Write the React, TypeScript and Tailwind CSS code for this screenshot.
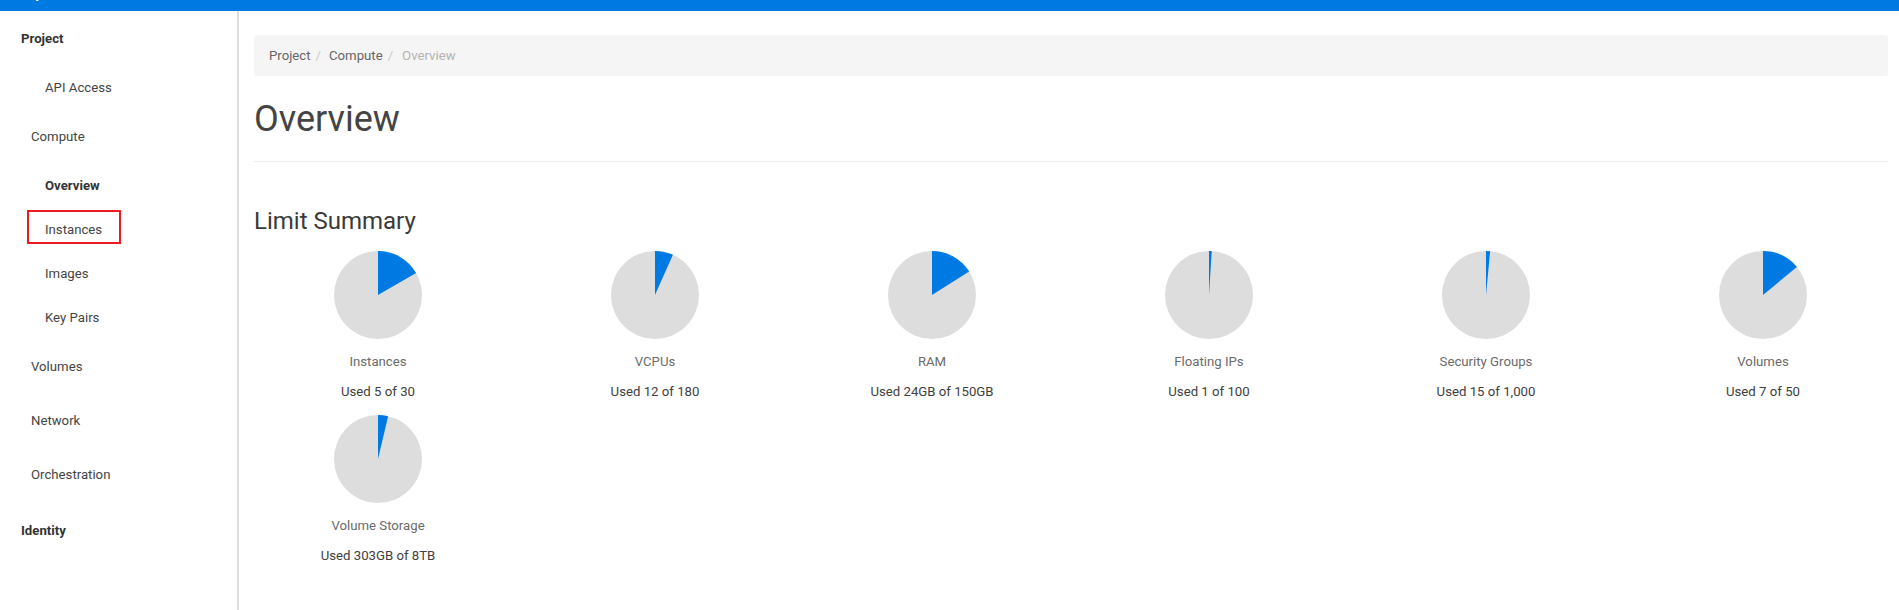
const navFont = { fontFamily: "Roboto, sans-serif" };

type Stat = { label: string; used: string; pct: number };

const stats: Stat[] = [
  { label: "Instances", used: "Used 5 of 30", pct: 5 / 30 },
  { label: "VCPUs", used: "Used 12 of 180", pct: 12 / 180 },
  { label: "RAM", used: "Used 24GB of 150GB", pct: 24 / 150 },
  { label: "Floating IPs", used: "Used 1 of 100", pct: 1 / 100 },
  { label: "Security Groups", used: "Used 15 of 1,000", pct: 15 / 1000 },
  { label: "Volumes", used: "Used 7 of 50", pct: 7 / 50 },
  { label: "Volume Storage", used: "Used 303GB of 8TB", pct: 303 / 8192 },
];

function Pie({ pct }: { pct: number }) {
  const a = pct * 2 * Math.PI;
  const x = 44 + 44 * Math.sin(a);
  const y = 44 - 44 * Math.cos(a);
  return (
    <svg width="88" height="88" viewBox="0 0 88 88" className="block">
      <circle cx="44" cy="44" r="44" fill="#dddddd" />
      <path d={`M44 44 L44 0 A44 44 0 0 1 ${x} ${y} Z`} fill="#007ae3" />
    </svg>
  );
}

function StatCell({ stat }: { stat: Stat }) {
  return (
    <div className="flex flex-col items-center h-[164px]">
      <Pie pct={stat.pct} />
      <div className="mt-[13px] text-[13.2px] leading-[20px] text-[#6b6b6b]">{stat.label}</div>
      <div className="mt-[10px] text-[13.2px] leading-[20px] text-[#404040]">{stat.used}</div>
    </div>
  );
}

function NavItem({ label, level, bold, className = "" }: { label: string; level: 0 | 1 | 2; bold?: boolean; className?: string }) {
  const pad = level === 0 ? "pl-[21px]" : level === 1 ? "pl-[31px]" : "pl-[45px]";
  return (
    <div className={`${pad} ${bold ? "font-bold text-[#333333]" : "text-[#444444]"} text-[13.2px] leading-[20px] ${className}`}>
      {label}
    </div>
  );
}

export default function App() {
  return (
    <div className="w-[1899px] h-[610px] overflow-hidden bg-white flex flex-col" style={navFont}>
      <div className="relative h-[11px] shrink-0 overflow-hidden bg-[#007ae3]">
        <span className="absolute left-[15px] top-[-17px] text-[14px] leading-[20px] text-white">Project</span>
      </div>
      <div className="flex flex-1 min-h-0">
        <aside className="w-[239px] shrink-0 border-r-2 border-[#dddddd] pt-[18px]">
          <NavItem label="Project" level={0} bold />
          <NavItem label="API Access" level={2} className="mt-[29px]" />
          <NavItem label="Compute" level={1} className="mt-[29px]" />
          <NavItem label="Overview" level={2} bold className="mt-[29px]" />
          <div className="relative mt-[24px]">
            <NavItem label="Instances" level={2} />
            <div className="absolute left-[27px] top-[-10px] w-[94px] h-[34px] border-2 border-[#ed1c24]" />
          </div>
          <NavItem label="Images" level={2} className="mt-[24px]" />
          <NavItem label="Key Pairs" level={2} className="mt-[24px]" />
          <NavItem label="Volumes" level={1} className="mt-[29px]" />
          <NavItem label="Network" level={1} className="mt-[34px]" />
          <NavItem label="Orchestration" level={1} className="mt-[34px]" />
          <NavItem label="Identity" level={0} bold className="mt-[36px]" />
        </aside>
        <main className="flex-1 min-w-0 pl-[15px] pt-[24px]">
          <div className="w-[1634px] h-[41px] rounded-[3px] bg-[#f5f5f5] pl-[15px] pt-[1px] flex items-center text-[13.2px] text-[#666666]">
            <span>Project</span>
            <span className="pl-[5px] pr-[8px] text-[#cccccc]">/</span>
            <span>Compute</span>
            <span className="pl-[5px] pr-[9px] text-[#cccccc]">/</span>
            <span className="text-[#b3b3b3]">Overview</span>
          </div>
          <h1 className="mt-[23px] text-[36px] leading-[40px] font-normal text-[#444444]">Overview</h1>
          <div className="mt-[22px] w-[1634px] border-t border-[#eeeeee]" />
          <h2 className="mt-[46px] text-[24px] leading-[26px] font-normal text-[#3a3a3a]">Limit Summary</h2>
          <div className="-ml-[14.5px] mt-[17px] w-[1662px] grid grid-cols-6">
            {stats.map((s) => (
              <StatCell key={s.label} stat={s} />
            ))}
          </div>
        </main>
      </div>
    </div>
  );
}
